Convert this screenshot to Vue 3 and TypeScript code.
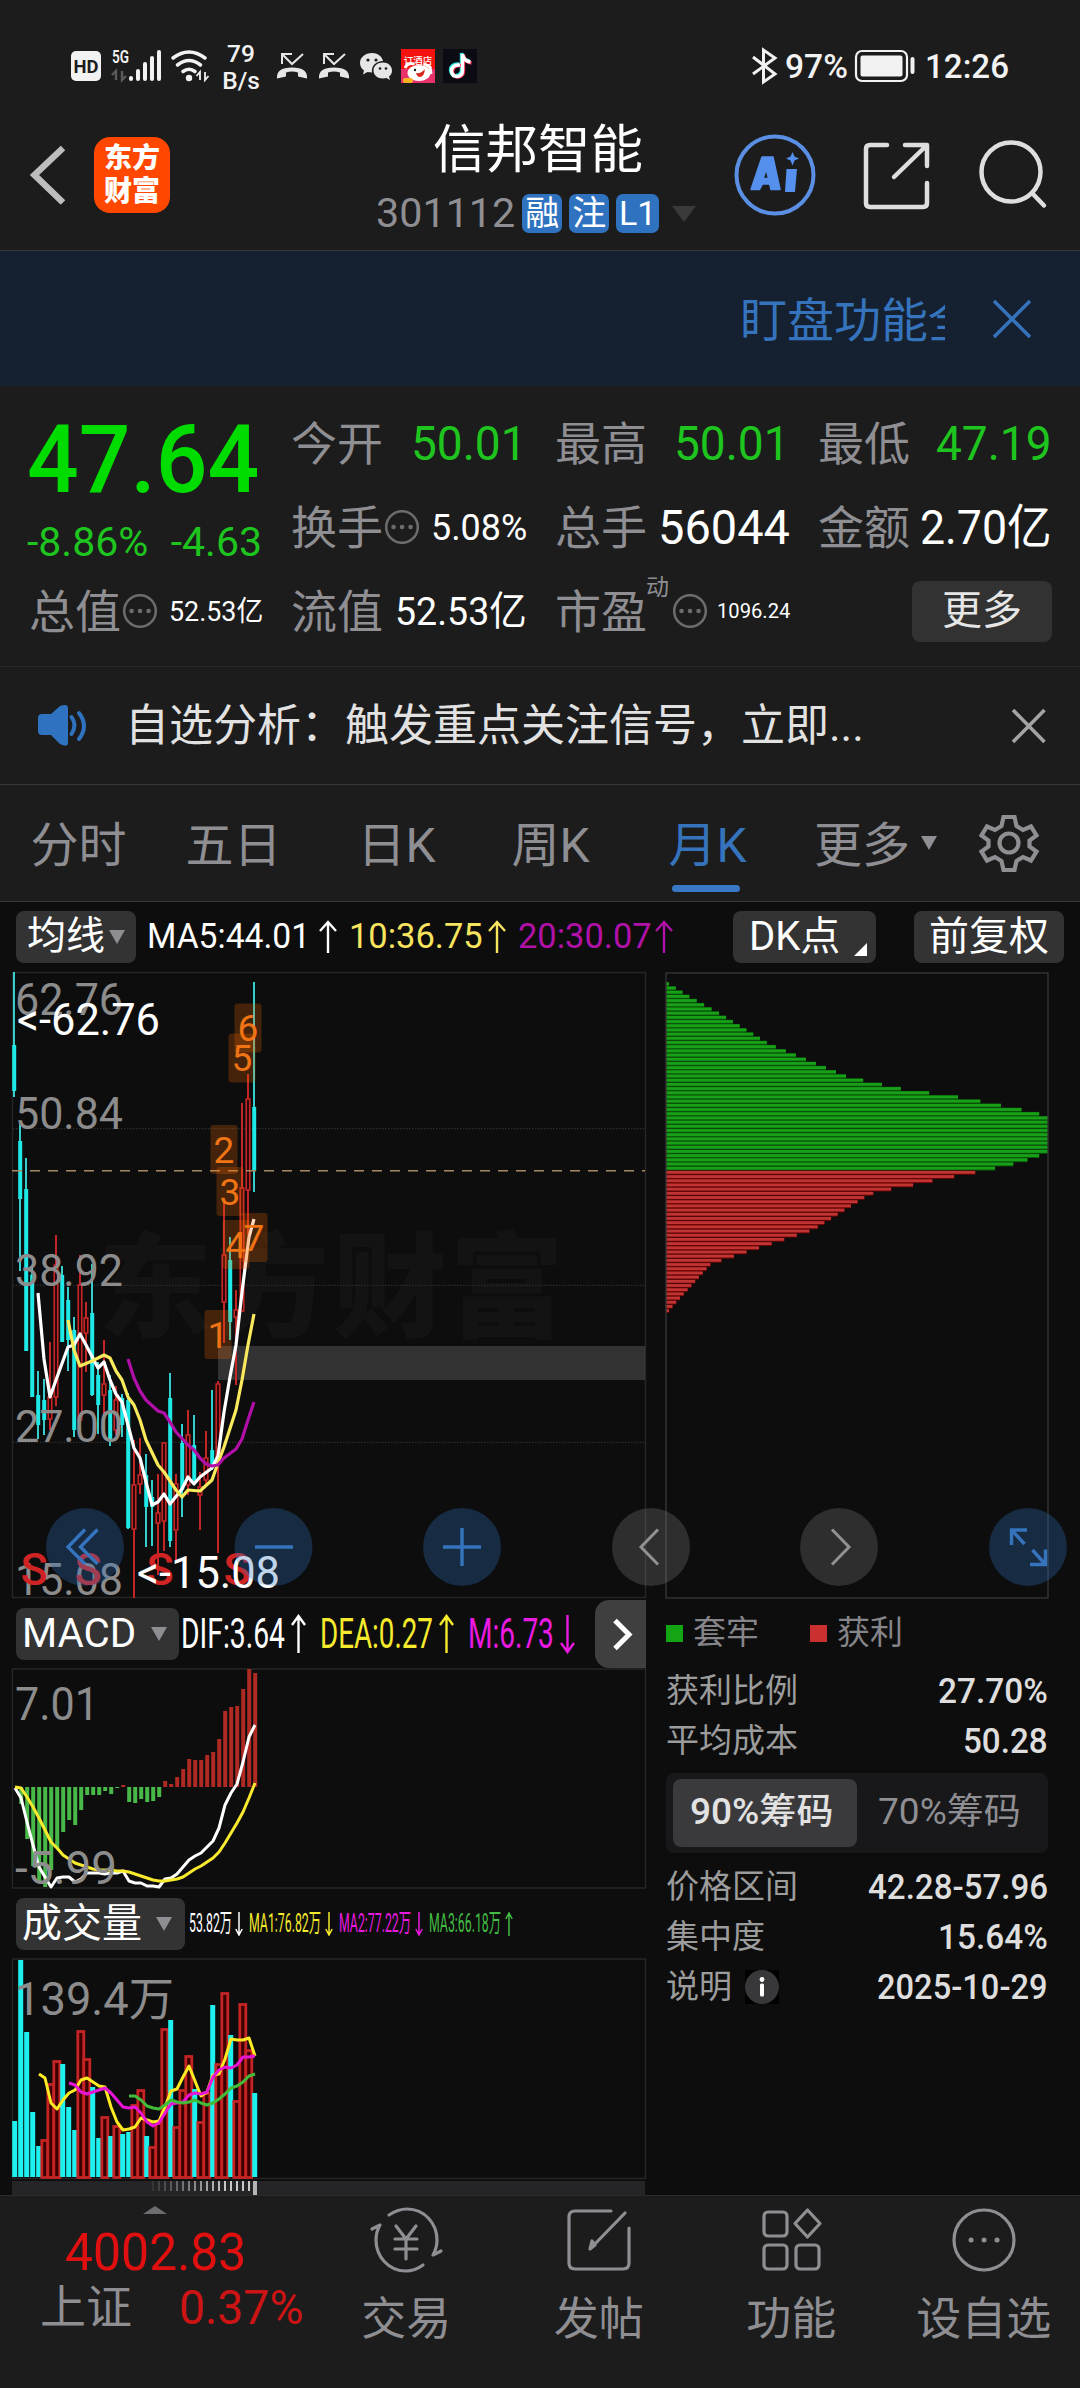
<script setup lang="ts">
import { computed } from 'vue'

// Condenses a text run horizontally until its advance equals the given width.
const vFit = {
  mounted(el: HTMLElement, binding: { value: number }) {
    const natural = el.offsetWidth
    if (!natural) return
    el.style.transform = `scaleX(${binding.value / natural})`
    el.style.marginRight = `${binding.value - natural}px`
  },
}

const badges = [
  { text: '融', w: 40 },
  { text: '注', w: 40 },
  { text: 'L1', w: 43 },
]

const tabs = [
  { text: '分时', w: 157 },
  { text: '五日', w: 153 },
  { text: '日K', w: 173 },
  { text: '周K', w: 135 },
  { text: '月K', w: 179, active: true },
]

interface Run { text: string; fit: number; cell: number; tone: string; dir: 'rise' | 'fall' }
const maRuns: Run[] = [
  { text: 'MA5:44.01', fit: 163, cell: 202, tone: 'white', dir: 'rise' },
  { text: '10:36.75', fit: 134, cell: 169, tone: 'yellow', dir: 'rise' },
  { text: '20:30.07', fit: 134, cell: 167, tone: 'purple', dir: 'rise' },
]
const macdRuns: Run[] = [
  { text: 'DIF:3.64', fit: 104, cell: 139, tone: 'white', dir: 'rise' },
  { text: 'DEA:0.27', fit: 113, cell: 148, tone: 'lemon', dir: 'rise' },
  { text: 'M:6.73', fit: 86, cell: 121, tone: 'pink', dir: 'fall' },
]
const volRuns: Run[] = [
  { text: '53.82万', fit: 43, cell: 60, tone: 'white', dir: 'fall' },
  { text: 'MA1:76.82万', fit: 72, cell: 90, tone: 'lemon', dir: 'fall' },
  { text: 'MA2:77.22万', fit: 72, cell: 90, tone: 'pink', dir: 'fall' },
  { text: 'MA3:66.18万', fit: 72, cell: 90, tone: 'lime', dir: 'rise' },
]

// [rising, high, bodyTop, bodyBottom, low]
type Candle = [number, number, number, number, number]
const candles: Candle[] = [
  [0, 972, 1045, 1091, 1097], [0, 1124, 1141, 1199, 1271], [0, 1158, 1189, 1351, 1351], [0, 1268, 1275, 1397, 1397],
  [0, 1371, 1395, 1425, 1439], [0, 1379, 1400, 1420, 1435], [1, 1342, 1397, 1419, 1430], [1, 1235, 1265, 1397, 1406],
  [0, 1266, 1275, 1342, 1342], [0, 1287, 1300, 1340, 1371], [0, 1317, 1330, 1430, 1437], [1, 1255, 1285, 1420, 1420],
  [1, 1302, 1318, 1333, 1372], [0, 1264, 1313, 1395, 1396], [0, 1362, 1375, 1405, 1434], [1, 1340, 1384, 1395, 1430],
  [0, 1375, 1390, 1440, 1446], [1, 1386, 1400, 1430, 1435], [0, 1394, 1398, 1425, 1437], [0, 1393, 1400, 1528, 1529],
  [1, 1440, 1485, 1529, 1598], [1, 1438, 1475, 1484, 1494], [0, 1454, 1475, 1507, 1547], [0, 1480, 1497, 1507, 1546],
  [1, 1474, 1513, 1523, 1575], [1, 1443, 1443, 1521, 1551], [0, 1373, 1398, 1541, 1547], [1, 1474, 1484, 1530, 1560],
  [0, 1424, 1443, 1490, 1517], [1, 1410, 1435, 1485, 1495], [0, 1415, 1445, 1480, 1485], [1, 1472, 1487, 1495, 1530],
  [1, 1431, 1458, 1480, 1486], [0, 1390, 1450, 1468, 1470], [1, 1381, 1384, 1458, 1553], [1, 1200, 1255, 1302, 1343],
  [0, 1237, 1260, 1322, 1340], [1, 1290, 1310, 1317, 1385], [1, 1103, 1188, 1311, 1311], [1, 1074, 1099, 1190, 1235],
  [0, 982, 1107, 1171, 1192],
]
const cx = (i: number) => 14 + i * 6

const ma5 = '38,1293 44,1359 50,1397 56,1380 68,1347 74,1345 80,1334 86,1345 98,1368 104,1362 110,1380 116,1394 122,1402 134,1448 140,1458 146,1482 152,1505 158,1502 164,1494 170,1504 182,1489 188,1477 194,1484 200,1477 212,1468 218,1456 224,1412 230,1377 236,1345 242,1292 249,1237 254,1219'
const ma10 = '68,1320 74,1350 80,1366 92,1361 104,1355 110,1358 116,1371 122,1380 128,1397 134,1405 140,1420 146,1440 158,1465 164,1472 176,1490 182,1497 188,1490 200,1491 212,1480 218,1463 224,1447 236,1410 242,1380 248,1345 254,1314'
const ma20 = '128,1359 134,1378 140,1391 146,1400 158,1411 164,1413 170,1422 176,1432 188,1445 194,1450 200,1458 206,1464 212,1466 218,1465 224,1458 236,1449 242,1439 248,1420 254,1402'

const axis = [
  { t: '62.76', y: 1015 }, { t: '50.84', y: 1128.5 }, { t: '38.92', y: 1286 }, { t: '27.00', y: 1442 }, { t: '15.08', y: 1594.5 },
]
const marks = [
  { t: '6', x: 248, y: 1003.5 }, { t: '5', x: 242, y: 1033.5 }, { t: '2', x: 224, y: 1125 }, { t: '3', x: 230, y: 1167 },
  { t: '4', x: 236, y: 1220 }, { t: '7', x: 254, y: 1213 }, { t: '1', x: 218, y: 1310 },
]
const sells = [34, 88, 160, 237]

const macdBars = [0, 17, 52, 79, 96, 100, 83, 61, 45, 33, 38, 23, 8, 8, 8, 4, 7, 1, -2, 15, 16, 12, 15, 14, 10, -6, -3, -10, -18, -28, -27, -27, -32, -35, -48, -76, -80, -81, -98, -118, -114]
const dif = [1, 11, 35, 58, 80, 90, 100, 91, 90, 90, 95, 92, 86, 86, 86, 87, 86, 86, 84, 94, 96, 96, 99, 99, 100, 92, 91, 87, 80, 73, 69, 66, 60, 54, 41, 18, 6, -3, -25, -50, -62]
const dea = [0, 1, 10, 20, 31, 43, 55, 61, 68, 72, 76, 78, 80, 82, 83, 83, 83, 84, 84, 85, 87, 89, 91, 93, 94, 94, 93, 92, 90, 86, 82, 79, 75, 71, 65, 56, 46, 36, 25, 11, -4]

const volumes = [-56, -217, -145, -65, -31, 37, 93, 116, -113, -70, -47, 146, 118, -90, -39, 60, -41, 51, -43, -45, 72, 87, -41, 30, 54, 148, -157, 50, 87, 121, -88, 55, 84, -172, 113, 184, -142, 76, 173, 127, -84]
const volMa1 = [103, 99, 74, 68, 77, 84, 87, 97, 99, 95, 91, 90, 70, 55, 47, 48, 50, 59, 57, 55, 56, 70, 86, 88, 100, 111, 96, 81, 85, 102, 103, 118, 138, 137, 137, 139, 121]
const volMa2 = [94, 92, 85, 83, 85, 87, 89, 84, 77, 70, 69, 70, 64, 55, 51, 54, 64, 73, 74, 75, 82, 84, 83, 85, 100, 107, 110, 109, 112, 120, 120, 121]
const volMa3 = [81, 81, 77, 71, 69, 68, 72, 77, 75, 74, 75, 77, 74, 72, 74, 78, 83, 89, 91, 95, 101, 103]

const line = (ys: number[], base: number, sign: number, from = 0) =>
  ys.map((v, k) => `${15 + (from + k) * 6},${base + sign * v}`).join(' ')

// Cost distribution outline: [y, bar width]
const outline: [number, number][] = [
  [982, 3], [995, 24], [1013, 56], [1042, 103], [1075, 182], [1087, 236], [1096, 298], [1108, 357], [1114, 382], [1150, 382],
  [1156, 368], [1162, 348], [1168, 322], [1174, 292], [1179, 266], [1182, 253], [1186, 232], [1190, 211], [1194, 201], [1228, 147],
  [1262, 45], [1304, 7], [1310, 2],
]
const chips = computed(() => {
  const out: { y: number; w: number; up: boolean }[] = []
  for (let y = 982; y < 1311; y += 4.19) {
    const k = outline.findIndex((p) => p[0] >= y)
    const b = outline[k]
    const a = outline[Math.max(k - 1, 0)]
    const t = b[0] === a[0] ? 0 : (y - a[0]) / (b[0] - a[0])
    out.push({ y, w: a[1] + (b[1] - a[1]) * t, up: y > 1170 })
  }
  return out
})

const ticks = Array.from({ length: 17 }, (_, i) => ({ x: 152 + i * 6, o: Math.min(0.08 + i * 0.055, 0.75) }))
const navItems = ['交易', '发帖', '功能', '设自选']
</script>

<template>
  <div class="screen">
    <header class="status">
      <svg class="status-left" viewBox="60 36 430 60" width="430" height="60">
        <rect x="71" y="51" width="30" height="30" rx="5" fill="#f2f2f2" />
        <text x="86" y="73" class="ico" font-size="19" font-weight="700" fill="#1c1c1c" text-anchor="middle" textLength="25" lengthAdjust="spacingAndGlyphs">HD</text>
        <text x="112" y="63" class="ico" font-size="18" font-weight="600" fill="#f2f2f2" textLength="17" lengthAdjust="spacingAndGlyphs">5G</text>
        <path d="M116 80V71l-4 4M122 71v9l4-4" stroke="#5a5a5a" stroke-width="2.4" fill="none" />
        <g fill="#f2f2f2">
          <rect x="129" y="76" width="4" height="5" rx="2" /><rect x="136" y="69" width="4" height="12" rx="2" />
          <rect x="143" y="62" width="4" height="19" rx="2" /><rect x="150" y="56" width="4" height="25" rx="2" />
          <rect x="157" y="50" width="4" height="31" rx="2" /><circle cx="189" cy="78" r="3.2" />
        </g>
        <path d="M173 58q16-12 32 0M177.500 65q11.500-9 23 0M183 71.500q6-4.500 12 0" stroke="#f2f2f2" stroke-width="3.600" fill="none" stroke-linecap="round" />
        <path d="M200 80V72l-3.500 4M205 72v8l3.500-4" stroke="#f2f2f2" stroke-width="1.800" fill="none" />
        <g class="ico" fill="#f2f2f2" font-weight="500" text-anchor="middle" font-size="24.500">
          <text x="241" y="61.500">79</text><text x="241" y="88.500">B/s</text>
        </g>
        <g v-for="dx in [0, 42]" :key="dx" :transform="`translate(${dx} 0)`" fill="none" stroke="#e6e6e6" stroke-width="2">
          <path d="M282 64V54h10M283 55l9 9 11-10" />
          <path d="M277 78.500q-1-11 15-11t15 11l-9-2v-4q-6-2-12 0v4z" fill="#e6e6e6" stroke="none" />
        </g>
        <g fill="#e6e6e6">
          <path d="M372 53c-7 0-12 4.500-12 10 0 3 1.500 5.500 4 7.500l-1 4 4.500-2.500 4.500.5c-1-6.500 4-11.500 11-11.500-1-5-5.500-8-11-8z" />
          <path d="M383 62.500c-5.500 0-9.500 3.500-9.500 8s4 8 9.500 8l3.500-.500 3.500 2-1-3.500c2-1.500 3-3.500 3-6 0-4.500-4-8-9-8z" />
          <g fill="#1c1c1c"><circle cx="368" cy="60" r="1.600" /><circle cx="376" cy="60" r="1.600" /><circle cx="380" cy="68.500" r="1.300" /><circle cx="386" cy="68.500" r="1.300" /></g>
        </g>
        <rect x="401" y="49" width="34" height="34" fill="#f4120f" />
        <rect x="401" y="69" width="34" height="14" fill="#e8306a" />
        <ellipse cx="419" cy="73" rx="11.500" ry="8" fill="#fff" /><path d="M405 68q3-6 9-4M424 64l6 3 1 7" stroke="#fff" stroke-width="3" fill="none" />
        <path d="M416 73q5 1 9-4-1 8-5 8-3 0-4-4z" fill="#d9261c" /><circle cx="415" cy="70" r="1.200" fill="#111" />
        <rect x="403" y="78" width="10" height="5" rx="2" fill="#f9b321" />
        <text x="418" y="64" class="ico" font-size="9.500" font-weight="500" fill="#fff" text-anchor="middle">订酒店</text>
        <rect x="443" y="49" width="34" height="34" fill="#0b0b14" />
        <g fill="none" stroke-width="3.400">
          <path d="M459 64q-8-.5-8.500 6 .5 5.500 5.500 5.500 5.500-.5 5.500-6V53q1 7 8 8" stroke="#25e6e0" />
          <path d="M461 65.500q-8-.5-8.500 6 .5 5.500 5.500 5.500 5.500-.5 5.500-6V55q1 7 8 8" stroke="#fb2a55" />
          <path d="M460 65q-8-.5-8.500 6 .5 5.500 5.500 5.500 5.500-.5 5.500-6V54q1 7 8 8" stroke="#fff" />
        </g>
      </svg>
      <svg class="status-right" viewBox="745 36 270 60" width="270" height="60">
        <path d="M753 57l22 17-11.500 8V50l11.500 8-22 16" stroke="#f2f2f2" stroke-width="3" fill="none" />
        <text x="785" y="78" class="ico" font-size="34" font-weight="500" fill="#f2f2f2" textLength="63" lengthAdjust="spacingAndGlyphs">97%</text>
        <rect x="856" y="51" width="51" height="30" rx="6" fill="none" stroke="#f2f2f2" stroke-width="2.200" />
        <rect x="860.500" y="55.500" width="42" height="21" rx="2" fill="#f2f2f2" />
        <rect x="910.500" y="57" width="4" height="17" rx="2" fill="#f2f2f2" />
        <text x="925" y="78" class="ico" font-size="34" font-weight="500" fill="#f2f2f2" textLength="84" lengthAdjust="spacingAndGlyphs">12:26</text>
      </svg>
    </header>

    <section class="titlebar">
      <svg class="back" viewBox="20 136 60 78" width="60" height="78"><path d="M63 148L34.500 175 63 202.500" fill="none" stroke="#bdbdbd" stroke-width="6.500" /></svg>
      <div class="logo"><span>东方</span><span>财富</span></div>
      <div class="title">
        <div class="name">信邦智能</div>
        <div class="code">
          <span class="num" v-fit="139">301112</span>
          <span v-for="b in badges" :key="b.text" class="badge" :style="{ width: b.w + 'px' }">{{ b.text }}</span>
          <i class="tri dim"></i>
        </div>
      </div>
      <svg class="tools" viewBox="730 130 330 90" width="330" height="90" fill="none">
        <circle cx="775" cy="175" r="38.500" stroke="#5a8fe3" stroke-width="4" />
        <path fill="#5590ee" stroke="#5590ee" stroke-width="1.500" stroke-linejoin="round" fill-rule="evenodd" d="M762 157h11l7 32.500H771l-1.300-5.500h-7.200L759.500 189.500H751zm4.200 12-3 9.500h5.300z" />
        <path d="M786.500 169h10.500l-2 23h-10z" fill="#5590ee" />
        <path d="M792.500 152l2 4.500 4.500 2-4.500 2-2 5-2-5-4.500-2 4.500-2z" fill="#5590ee" />
        <g stroke="#dedede" stroke-width="4.500" stroke-linecap="round" stroke-linejoin="round">
          <path d="M887 145h-17q-4 0-4 4v54q0 4 4 4h53q4 0 4-4v-20M905 145h22v21M926 146l-32 31" />
          <circle cx="1011" cy="172" r="29.500" /><path d="M1032 193l12 12.500" />
        </g>
      </svg>
    </section>

    <section class="banner">
      <div class="ticker">盯盘功能全</div>
      <svg viewBox="990 295 44 44" width="44" height="44"><path d="M994 300l36 36M1030 300l-36 36" stroke="#3574bd" stroke-width="3.500" /></svg>
    </section>

    <section class="quote">
      <div class="col c1">
        <div class="price"><span class="fit" v-fit="232">47.64</span></div>
        <div class="chg"><span>-8.86%</span><span>-4.63</span></div>
        <div class="pair last"><label>总值</label><svg class="dots" viewBox="0 0 34 34"><circle cx="17" cy="17" r="15.800" /><path d="M8.500 17h.1M17 17h.1M25.500 17h.1" /></svg><b><span class="fit f28" v-fit="94">52.53亿</span></b></div>
      </div>
      <div class="col c2">
        <div class="pair"><label>今开</label><b class="green"><span class="fit f48" v-fit="116">50.01</span></b></div>
        <div class="pair"><label>换手</label><svg class="dots" viewBox="0 0 34 34"><circle cx="17" cy="17" r="15.800" /><path d="M8.500 17h.1M17 17h.1M25.500 17h.1" /></svg><b><span class="fit f37" v-fit="96">5.08%</span></b></div>
        <div class="pair"><label>流值</label><b><span class="fit f40" v-fit="132">52.53亿</span></b></div>
      </div>
      <div class="col c3">
        <div class="pair"><label>最高</label><b class="green"><span class="fit f48" v-fit="116">50.01</span></b></div>
        <div class="pair"><label>总手</label><b><span class="fit f48" v-fit="132">56044</span></b></div>
        <div class="pair"><label>市盈<sup>动</sup></label><svg class="dots pe" viewBox="0 0 34 34"><circle cx="17" cy="17" r="15.800" /><path d="M8.500 17h.1M17 17h.1M25.500 17h.1" /></svg><b><span class="fit f21" v-fit="73">1096.24</span></b></div>
      </div>
      <div class="col c4">
        <div class="pair"><label>最低</label><b class="green"><span class="fit f48" v-fit="116">47.19</span></b></div>
        <div class="pair"><label>金额</label><b><span class="fit f48" v-fit="132">2.70亿</span></b></div>
        <div class="pair"><button class="more">更多</button></div>
      </div>
    </section>

    <section class="notice">
      <svg viewBox="30 700 64 50" width="64" height="50"><path d="M42 713q-4 0-4 4v13q0 4 4 4h9l9 9q8 4 8-1v-35q0-5-8-2l-9 8z" fill="#2f72c0" /><path d="M71.500 716q6 8 0 17M79 712q10 13 0 26" stroke="#2f72c0" stroke-width="4" fill="none" stroke-linecap="round" /></svg>
      <p>自选分析：触发重点关注信号，立即...</p>
      <svg viewBox="1008 705 42 42" width="42" height="42"><path d="M1013 710l31.500 32M1044.500 710l-31.500 32" stroke="#a4a4a4" stroke-width="3.600" /></svg>
    </section>

    <nav class="tabs">
      <span v-for="t in tabs" :key="t.text" :class="['tab', { on: t.active }]" :style="{ width: t.w + 'px' }">{{ t.text }}</span>
      <span class="tab more-tab">更多</span><i class="tri small"></i>
      <svg class="gear" viewBox="980 813 62 62" width="62" height="62" fill="none" stroke="#8e8e93" stroke-width="4.200" stroke-linejoin="miter">
        <path d="M1005.500 817h11l2 9 6.500 4 8-3.500 5.500 9-7 5v6l7 5-5.500 9-8-3.500-6.500 4-2 9h-11l-2-9-6.500-4-8 3.500-5.500-9 7-5v-6l-7-5 5.500-9 8 3.500 6.500-4z" />
        <circle cx="1011" cy="843" r="9.500" />
      </svg>
    </nav>

    <section class="board">
      <div class="head ma-head">
        <button class="sel w120">均线<i class="tri"></i></button>
        <div class="runs ma">
          <span v-for="r in maRuns" :key="r.text" :class="['run', r.tone]" :style="{ width: r.cell + 'px' }"><span class="fit" v-fit="r.fit">{{ r.text }}</span><svg viewBox="0 0 18 34" width="18" height="34"><path d="M9 33V2M1 11L9 2l8 9" /></svg></span>
        </div>
        <button class="sel dk"><span class="fit" v-fit="91">DK点</span><i class="corner"></i></button>
        <button class="sel fq">前复权</button>
      </div>

      <div class="body">
        <div class="left">
          <svg class="chart" viewBox="0 971 660 628" width="660" height="628">
            <rect x="12.500" y="972.500" width="633" height="625" fill="none" stroke="#262626" stroke-width="1.500" />
            <text x="98" y="1328" class="wm" textLength="466">东方财富</text>
            <path d="M13 1128.700h632M13 1285.300h632M13 1442.300h632" stroke="#2c2c2c" stroke-width="1.200" stroke-dasharray="1.500 1.500" />
            <rect x="218" y="1346" width="427" height="34" fill="#fff" fill-opacity=".155" />
            <g v-for="(c, i) in candles" :key="i" :class="c[0] ? 'bull' : 'bear'">
              <path v-if="c[0]" :d="`M${cx(i)} ${c[1]}V${c[2]}M${cx(i)} ${c[3]}V${c[4]}`" />
              <path v-else :d="`M${cx(i)} ${c[1]}V${c[4]}`" />
              <rect v-if="c[0]" :x="cx(i) - 1.800" :y="c[2]" width="3.600" :height="c[3] - c[2]" />
              <rect v-else :x="cx(i) - 1.800" :y="c[2]" width="4" :height="c[3] - c[2]" />
            </g>
            <g fill="none" stroke-width="3.200" stroke-linejoin="round">
              <polyline :points="ma5" stroke="#fff" /><polyline :points="ma10" stroke="#f9e95c" /><polyline :points="ma20" stroke="#b010a8" />
            </g>
            <path d="M12 1170.700H645" stroke="#a58a62" stroke-width="1.600" stroke-dasharray="10 8" />
            <g v-for="m in marks" :key="m.t">
              <rect :x="m.x - 13.500" :y="m.y" width="27" height="49" rx="3" fill="#ff6a00" fill-opacity=".23" />
              <text :x="m.x" :y="m.y + 37.500" class="mk">{{ m.t }}</text>
            </g>
            <g class="ax"><text v-for="a in axis" :key="a.t" x="15" :y="a.y" textLength="108" lengthAdjust="spacingAndGlyphs">{{ a.t }}</text></g>
            <text v-for="s in sells" :key="s" :x="s" y="1585" class="sell">S</text>
            <g class="ext"><text x="17" y="1035" textLength="143" lengthAdjust="spacingAndGlyphs">&lt;-62.76</text><text x="137" y="1588" textLength="143" lengthAdjust="spacingAndGlyphs">&lt;-15.08</text></g>
          </svg>

          <div class="head sub">
            <button class="sel macd"><span class="fit" v-fit="114">MACD</span><i class="tri"></i></button>
            <div class="runs mc">
              <span v-for="r in macdRuns" :key="r.text" :class="['run', r.tone]" :style="{ width: r.cell + 'px' }"><span class="fit" v-fit="r.fit">{{ r.text }}</span><svg :class="r.dir" viewBox="0 0 15 40" width="15" height="40"><path d="M7.500 39V2M1 11l6.500-9 6.500 9" /></svg></span>
            </div>
            <div class="next"><svg viewBox="595 1600 51 68" width="51" height="68"><path d="M615 1620.500l14 14-14 14" fill="none" stroke="#fff" stroke-width="5" /></svg></div>
          </div>

          <svg class="chart" viewBox="0 1668 660 221" width="660" height="221">
            <rect x="12.500" y="1669" width="633" height="219" fill="none" stroke="#262626" stroke-width="1.500" />
            <rect v-for="(b, i) in macdBars" :key="i" :x="13.200 + i * 6" :y="b > 0 ? 1787 : 1787 + b" width="4" :height="Math.abs(b)" :fill="b > 0 ? '#48b948' : '#b02a24'" />
            <g fill="none" stroke-width="3" stroke-linejoin="round"><polyline :points="line(dif, 1787, 1)" stroke="#fff" /><polyline :points="line(dea, 1787, 1)" stroke="#f8ea2e" /></g>
            <g class="ax big"><text x="15" y="1719.500" textLength="84" lengthAdjust="spacingAndGlyphs">7.01</text><text x="15" y="1883.500" textLength="102" lengthAdjust="spacingAndGlyphs">-5.99</text></g>
          </svg>

          <div class="head sub">
            <button class="sel vol">成交量<i class="tri"></i></button>
            <div class="runs vo">
              <span v-for="r in volRuns" :key="r.text" :class="['run', r.tone]" :style="{ width: r.cell + 'px' }"><span class="fit" v-fit="r.fit">{{ r.text }}</span><svg :class="r.dir" viewBox="0 0 8 24" width="8" height="24"><path d="M4 24V1M.8 7L4 1l3.200 6" /></svg></span>
            </div>
          </div>

          <svg class="chart" viewBox="0 1958 660 222" width="660" height="222">
            <rect x="12.500" y="1959" width="633" height="219.500" fill="none" stroke="#262626" stroke-width="1.500" />
            <g v-for="(v, i) in volumes" :key="i">
              <rect v-if="v < 0" :x="12.200 + i * 6" :y="2177 + v" width="5" :height="-v" fill="#1df0ee" />
              <rect v-else :x="11.800 + i * 6" :y="2177.500 - v" width="6" :height="v" fill="#3a0000" stroke="#c42424" stroke-width="2.800" />
            </g>
            <g fill="none" stroke-width="3" stroke-linejoin="round">
              <polyline :points="line(volMa1, 2177, -1, 4)" stroke="#fdea22" /><polyline :points="line(volMa2, 2177, -1, 9)" stroke="#ea14d6" /><polyline :points="line(volMa3, 2177, -1, 19)" stroke="#42bb38" />
            </g>
            <g class="ax big"><text x="15" y="2015" textLength="159" lengthAdjust="spacingAndGlyphs">139.4万</text></g>
          </svg>
          <svg class="chart" viewBox="0 2180 660 15" width="660" height="15">
            <rect x="12" y="2181" width="633" height="14" fill="#252527" />
            <rect v-for="t in ticks" :key="t.x" :x="t.x" y="2181" width="2" height="10" fill="#fff" :fill-opacity="t.o" />
            <rect x="253" y="2181" width="4" height="14" fill="#b4b4b4" />
          </svg>
        </div>

        <div class="right">
          <svg class="chart" viewBox="660 971 420 629" width="420" height="629">
            <g v-for="c in chips" :key="c.y">
              <rect x="666" :y="c.y" :width="c.w" height="4.190" :fill="c.up ? '#6d0505' : '#0a5c0a'" />
              <rect x="666" :y="c.y + .400" :width="c.w" height="2.800" :fill="c.up ? '#c03434' : '#18a018'" />
            </g>
            <rect x="666" y="973" width="382" height="625" fill="none" stroke="#363636" stroke-width="1.400" />
          </svg>
          <div class="legend"><i class="sq g"></i><span>套牢</span><i class="sq r"></i><span>获利</span></div>
          <div class="kv"><span>获利比例</span><b><span class="fit" v-fit="110">27.70%</span></b></div>
          <div class="kv"><span>平均成本</span><b><span class="fit" v-fit="85">50.28</span></b></div>
          <div class="toggle"><span class="on"><span class="fit" v-fit="143">90%筹码</span></span><span><span class="fit" v-fit="143">70%筹码</span></span></div>
          <div class="kv"><span>价格区间</span><b><span class="fit" v-fit="180">42.28-57.96</span></b></div>
          <div class="kv"><span>集中度</span><b><span class="fit" v-fit="110">15.64%</span></b></div>
          <div class="kv"><span>说明</span><svg class="info" viewBox="0 0 34 34" width="34" height="34"><rect width="34" height="34" fill="#000" /><circle cx="17" cy="17" r="17" fill="#38383a" /><circle cx="17" cy="9.500" r="2.400" fill="#fff" /><rect x="15" y="13.500" width="4" height="13" rx="1.500" fill="#fff" /></svg><b><span class="fit" v-fit="171">2025-10-29</span></b></div>
        </div>

        <svg class="controls" viewBox="0 1505 1080 84" width="1080" height="84" fill="none">
          <g fill="#2f72c0" fill-opacity=".3"><circle v-for="x in [85, 273.500, 462, 1028]" :key="x" :cx="x" cy="1547" r="39" /></g>
          <g fill="#9a9aa0" fill-opacity=".23"><circle v-for="x in [651, 839]" :key="x" :cx="x" cy="1547" r="39" /></g>
          <g stroke="#3574bd" stroke-width="3.400">
            <path d="M85 1529.500L68 1547l17 17M97.500 1529.500L80.500 1547l17 17M255 1547h38M443 1547h38M462 1528v38" />
            <path d="M1027 1530h-15.500v15M1012 1530.500l12.500 13.500M1030 1564.500h15.500v-15M1045 1564l-12.500-14" />
          </g>
          <path d="M658 1529.500L641 1547l17 17.500M832 1529.500l17 17.500-17 17.500" stroke="#919191" stroke-width="3" />
        </svg>
      </div>
    </section>

    <footer class="bottom">
      <div class="index">
        <i class="peak"></i>
        <div class="pt"><span class="fit" v-fit="181">4002.83</span></div>
        <div class="row"><label>上证</label><span class="fit" v-fit="124">0.37%</span></div>
      </div>
      <div v-for="(n, i) in navItems" :key="n" class="item">
        <svg viewBox="0 0 80 72" width="80" height="72" fill="none" stroke="#8e8e93" stroke-width="3.200" stroke-linecap="round" stroke-linejoin="round">
          <g v-if="i === 0">
            <path d="M23 11q9-6 18-6c18 0 30 15 30 31q0 8-4 15l8-4M57 61q-8 6-17 6C22 67 10 52 10 36q0-8 4-15l-8 4" />
            <path d="M30 22l10 13 10-13M29 35h22M29 45h22M40 35v20" />
          </g>
          <g v-else-if="i === 1"><path d="M52 7H16q-6 0-6 6v46q0 6 6 6h48q6 0 6-6V24M32 44L66 9" /><path d="M31 45l2-8 3 4z" /></g>
          <g v-else-if="i === 2"><rect x="13" y="8" width="23" height="24" rx="4" /><rect x="13" y="41" width="23" height="24" rx="4" /><rect x="45" y="41" width="23" height="24" rx="4" /><path d="M56.500 6l12.500 13.500L56.500 33 44 19.500z" /></g>
          <g v-else><circle cx="40" cy="36" r="30" /><path d="M27 36h.1M40 36h.1M53 36h.1" stroke-width="5" /></g>
        </svg>
        <span>{{ n }}</span>
      </div>
    </footer>
  </div>
</template>

<style>
body { background: #0d0d0d; }
</style>

<style scoped>
.screen { width: 1080px; height: 2388px; overflow: hidden; background: #1c1c1c; color: #fff; font-family: Roboto, "Noto Sans CJK SC", sans-serif; line-height: 1.2; display: flex; flex-direction: column; }
.screen * { box-sizing: border-box; }
svg { display: block; flex: none; }
button { border: 0; padding: 0; margin: 0; font: inherit; color: #fff; display: flex; align-items: center; }
b { font-weight: 400; }
.fit { display: inline-block; white-space: nowrap; transform-origin: 0 50%; flex: none; }
.ico { font-family: Roboto, "Noto Sans CJK SC", sans-serif; }
.tri { flex: none; width: 0; height: 0; border: 8.500px solid transparent; border-top: 14px solid #8e8e93; border-bottom: 0; }

.status { height: 96px; padding: 36px 65px 0 60px; display: flex; justify-content: space-between; flex: none; }
.titlebar { height: 155px; border-bottom: 1px solid #383838; display: flex; flex: none; }
.back { margin: 40px 0 0 20px; }
.logo { margin: 41px 0 0 14px; width: 76px; height: 76px; border-radius: 16px; background: #ff4700; display: flex; flex-direction: column; align-items: center; padding-top: 5px; font-weight: 900; font-size: 28px; line-height: 33px; }
.title { margin-left: 206px; width: 354px; display: flex; flex-direction: column; align-items: flex-start; }
.name { font-size: 52.500px; line-height: 60px; margin: 24px 0 0 57px; font-weight: 400; white-space: nowrap; }
.code { display: flex; align-items: center; height: 39px; margin: 14px 0 0 0; }
.num { display: inline-block; transform-origin: 0 50%; color: #8e8e93; font-size: 41px; margin-right: 6px; }
.badge { background: #2f72c0; border-radius: 7px; height: 39px; line-height: 39px; font-size: 34px; text-align: center; margin-left: 7px; white-space: nowrap; flex: none; }
.tri.dim { border-width: 16px 12px 0; border-top-color: #3a3a3a; margin-left: 13px; }
.tools { margin: 34px 0 0 0; }

.banner { height: 135px; background: #152130; display: flex; flex: none; align-items: center; padding-bottom: 2px; color: #3574bd; }
.ticker { margin: 6px 0 0 740px; width: 205px; overflow: hidden; white-space: nowrap; font-size: 47px; line-height: 70px; }
.banner svg { margin: 0 0 0 45px; }

.quote { height: 281px; border-bottom: 1px solid #2a2a2a; padding-top: 16px; display: flex; flex: none; }
.col { display: flex; flex-direction: column; }
.c1 { width: 263px; margin-left: 27px; }
.c2 { width: 236px; margin-left: 1px; }
.c3 { width: 235px; margin-left: 28px; }
.c4 { width: 234px; margin-left: 28px; }
.price { height: 112px; line-height: 115px; font-size: 95px; font-weight: 500; color: #00dc00; }
.chg { height: 56px; width: 235px; line-height: 56px; font-size: 41px; color: #1fc51f; display: flex; justify-content: space-between; white-space: nowrap; }
.pair { height: 84px; display: flex; align-items: center; }
.pair.last { margin-left: 2px; width: 234px; }
.pair label { font-size: 46px; color: #8e8e93; white-space: nowrap; position: relative; line-height: 60px; }
.pair sup { position: absolute; left: 91px; top: -6px; font-size: 23px; line-height: 24px; }
.pair b { margin-left: auto; display: flex; align-items: center; height: 60px; }
.dots { width: 34px; height: 34px; margin-left: 2px; margin-bottom: 3px; fill: none; stroke: #6c6c6c; stroke-width: 2.500; }
.dots path { stroke-width: 4.500; stroke-linecap: round; }
.dots.pe { margin-left: 26px; }
.green { color: #1fc51f; }
.f48 { font-size: 48px; } .f40 { font-size: 39.500px; } .f37 { font-size: 37px; } .f28 { font-size: 28px; } .f21 { font-size: 21px; }
.more { margin-left: auto; margin-bottom: 2px; width: 140px; height: 61px; border-radius: 8px; background: #323232; justify-content: center; font-size: 40px; color: #e6e6e6; }

.notice { height: 118px; border-bottom: 1px solid #383838; display: flex; align-items: center; flex: none; padding-left: 30px; }
.notice p { margin: 0 0 0 31px; width: 883px; font-size: 44px; line-height: 60px; color: #e2e2e2; white-space: nowrap; }

.tabs { height: 117px; border-bottom: 1px solid #383838; display: flex; flex: none; }
.tab { height: 116px; line-height: 121px; font-size: 48px; color: #8e8e93; text-align: center; position: relative; white-space: nowrap; }
.tab.on { color: #3574bd; }
.tab.on::after { content: ""; position: absolute; left: 54px; bottom: 9px; width: 68px; height: 7px; border-radius: 4px; background: #3878c4; }
.more-tab { width: 96px; margin-left: 17px; }
.tri.small { margin: 51px 0 0 11px; }
.gear { margin: 28px 0 0 41px; }

.board { background: #0d0d0d; height: 1293px; flex: none; }
.head { display: flex; align-items: center; }
.ma-head { height: 69px; padding-left: 16px; }
.sel { background: #333; border-radius: 8px; height: 52px; font-size: 39px; white-space: nowrap; flex: none; }
.w120 { width: 120px; padding-left: 11px; } .w120 .tri { margin-left: 4px; }
.runs { display: flex; flex: none; }
.run { display: flex; align-items: center; justify-content: space-between; flex: none; }
.run svg { fill: none; stroke: currentColor; stroke-width: 2.400; }
.run svg.fall { transform: rotate(180deg); }
.ma { margin-left: 11px; font-size: 35.500px; width: 586px; }
.ma .run { padding-right: 12px; }
.white { color: #fff; } .yellow { color: #f8e45e; } .purple { color: #b012a8; } .lemon { color: #f6ea2c; } .pink { color: #ea1ae0; } .lime { color: #43bd43; }
.dk { width: 143px; padding-left: 16px; font-size: 40px; }
.corner { width: 0; height: 0; border-left: 13px solid transparent; border-bottom: 13px solid #fff; margin: 25px 0 0 14px; }
.fq { width: 150px; margin-left: 38px; justify-content: center; font-size: 40px; }
.body { display: flex; position: relative; }
.left { width: 660px; } .right { width: 420px; }
.sub { height: 69px; padding: 0 14px 0 16px; }
.macd { width: 163px; padding-left: 6px; font-size: 41px; } .macd .tri { margin-left: 15px; }
.mc { margin-left: 2px; font-size: 43px; width: 408px; } .mc .run { padding-right: 14px; }
.next { margin-left: auto; background: #3f3f3f; border-radius: 14px 0 0 14px; width: 51px; height: 68px; }
.vol { width: 169px; padding-left: 6px; font-size: 40px; } .vol .tri { margin-left: 14px; }
.vo { margin-left: 4px; font-size: 26px; } .vo .run { padding-right: 6px; } .vo .run svg { stroke-width: 1.500; }
.wm { font: 900 114px "Noto Sans CJK SC", sans-serif; fill: #131313; }
.bull path { stroke: #c42626; stroke-width: 2; fill: none; } .bull rect { fill: #2a0606; stroke: #c42626; stroke-width: 1.600; }
.bear path { stroke: #34cfcc; stroke-width: 2; } .bear rect { fill: #1fe9e6; }
.mk { font-size: 37px; fill: #f07414; text-anchor: middle; }
.ax { font-size: 44px; fill: #8c8c8c; } .big { font-size: 46px; }
.ext { font-size: 44px; fill: #fff; }
.sell { font-size: 45px; font-weight: 500; fill: #d02424; text-anchor: middle; }
.controls { position: absolute; left: 0; top: 534px; }

.right { display: flex; flex-direction: column; }
.right > div { margin-left: 6px; width: 382px; }
.legend { height: 66px; display: flex; align-items: center; font-size: 33px; color: #85858a; }
.legend span { width: 117px; }
.sq { width: 17px; height: 17px; margin-right: 10px; } .g { background: #14a514; } .r { background: #cb3030; }
.kv { height: 50px; display: flex; align-items: center; font-size: 33px; color: #9c9c9c; white-space: nowrap; }
.kv b { margin-left: auto; font-size: 35.500px; font-weight: 500; color: #dedede; }
.info { margin-left: 13px; }
.toggle { height: 80px; margin-top: 7px; margin-bottom: 9px; background: #18181a; border-radius: 8px; display: flex; align-items: center; padding: 0 7px; font-size: 36px; color: #8e8e93; }
.toggle > span { width: 184px; height: 68px; border-radius: 8px; display: flex; align-items: center; justify-content: center; }
.toggle .on { background: #3a3a3c; color: #e2e2e2; font-weight: 500; padding-right: 7px; }

.bottom { height: 193px; border-top: 1px solid #2b2b2b; background: #1c1c1c; display: flex; flex: none; }
.index { width: 310px; }
.peak { display: block; width: 0; height: 0; border: 12px solid transparent; border-top: 0; border-bottom: 8px solid #6c6c71; margin: 10px 0 0 143px; }
.pt { color: #e01010; font-size: 51px; line-height: 60px; margin: 9px 0 0 65px; }
.row { display: flex; align-items: center; color: #cc1414; font-size: 47.500px; height: 56px; margin: -3px 0 0 40px; }
.row label { color: #8e8e93; font-size: 46px; width: 139px; }
.item { width: 192.500px; display: flex; flex-direction: column; align-items: center; color: #8e8e93; font-size: 45px; }
.item svg { margin-top: 8px; }
.item span { line-height: 60px; margin-top: 14px; white-space: nowrap; }
</style>
